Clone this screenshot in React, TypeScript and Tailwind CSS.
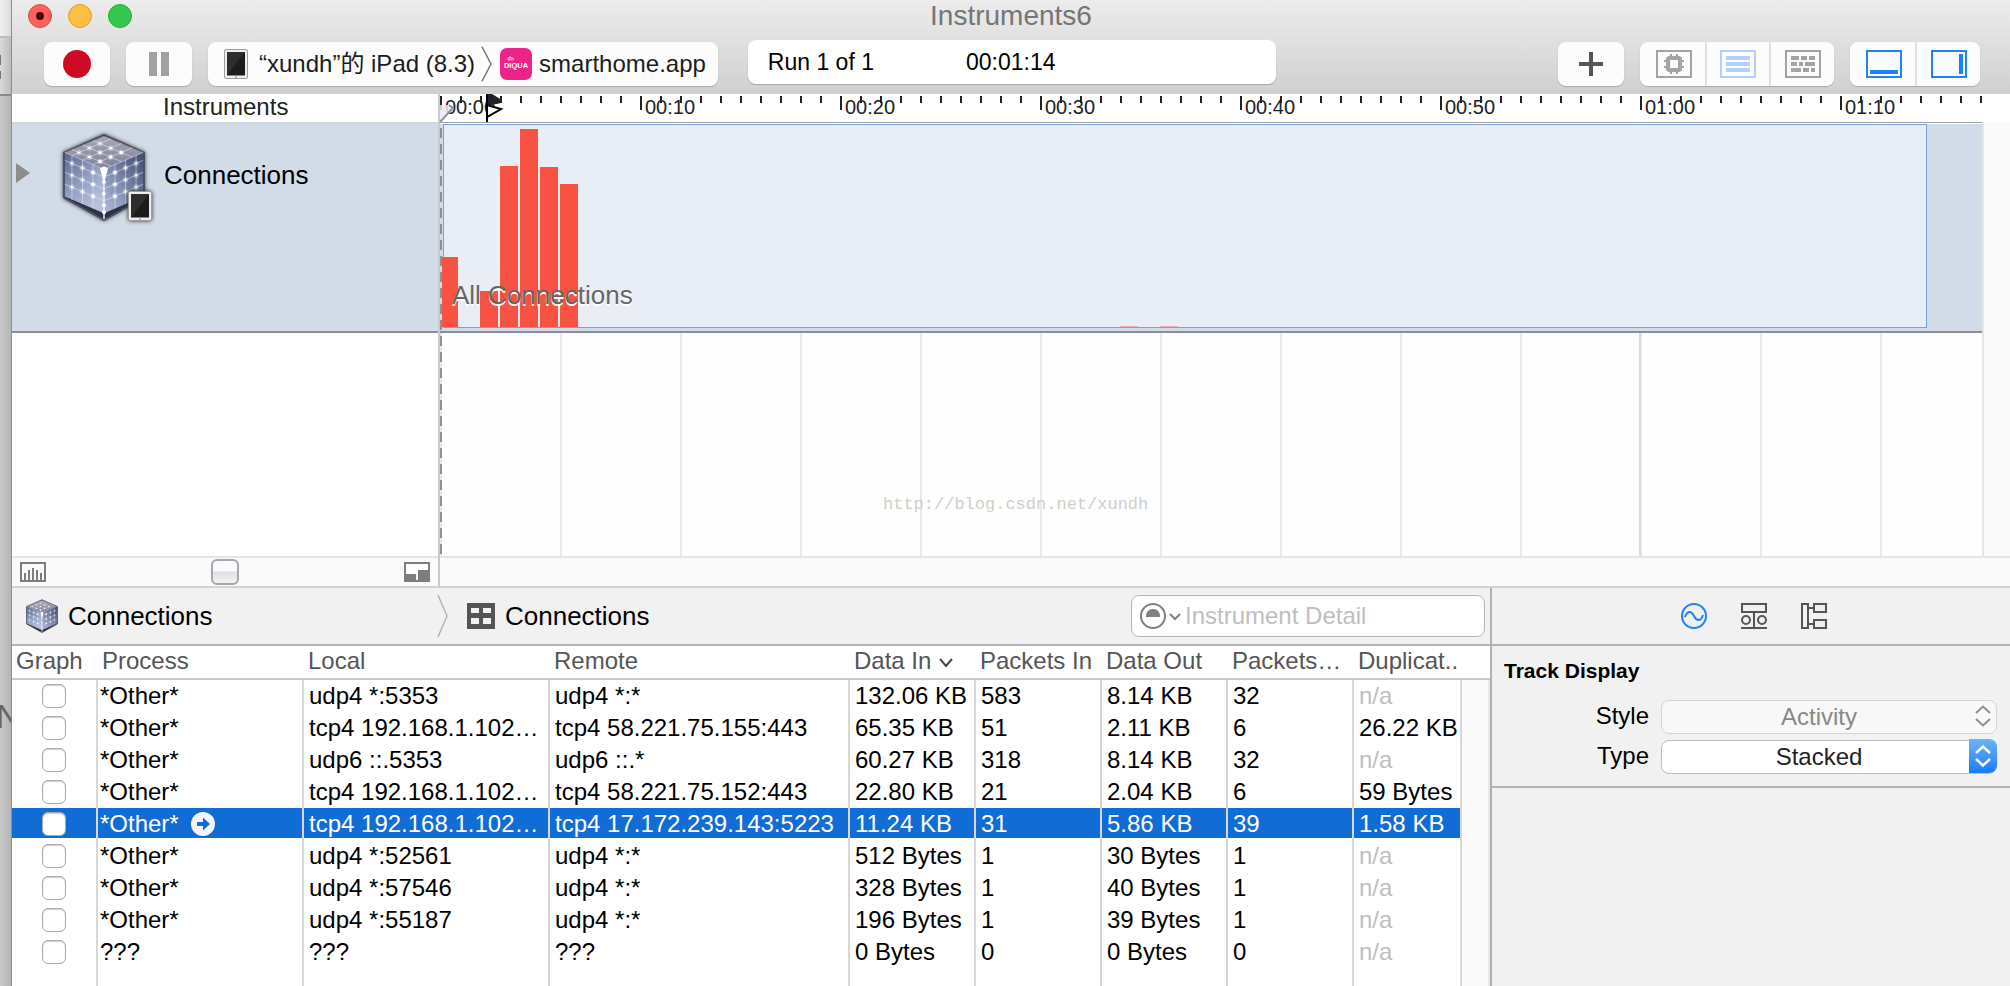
import type { ReactNode } from 'react';

type Point = [number, number];

const PX_PER_SECOND = 20;

const timeLabels = ['00:00', '00:10', '00:20', '00:30', '00:40', '00:50', '01:00', '01:10'];

const bars = [
  { x: 2, width: 16, height: 70 },
  { x: 40, width: 18, height: 36 },
  { x: 60, width: 18, height: 161 },
  { x: 80, width: 18, height: 198 },
  { x: 100, width: 18, height: 160 },
  { x: 120, width: 18, height: 143 },
];

const connections = [
  { process: '*Other*', local: 'udp4 *:5353', remote: 'udp4 *:*', dataIn: '132.06 KB', packetsIn: '583', dataOut: '8.14 KB', packetsOut: '32', duplicates: 'n/a' },
  { process: '*Other*', local: 'tcp4 192.168.1.102…', remote: 'tcp4 58.221.75.155:443', dataIn: '65.35 KB', packetsIn: '51', dataOut: '2.11 KB', packetsOut: '6', duplicates: '26.22 KB' },
  { process: '*Other*', local: 'udp6 ::.5353', remote: 'udp6 ::.*', dataIn: '60.27 KB', packetsIn: '318', dataOut: '8.14 KB', packetsOut: '32', duplicates: 'n/a' },
  { process: '*Other*', local: 'tcp4 192.168.1.102…', remote: 'tcp4 58.221.75.152:443', dataIn: '22.80 KB', packetsIn: '21', dataOut: '2.04 KB', packetsOut: '6', duplicates: '59 Bytes' },
  { process: '*Other*', local: 'tcp4 192.168.1.102…', remote: 'tcp4 17.172.239.143:5223', dataIn: '11.24 KB', packetsIn: '31', dataOut: '5.86 KB', packetsOut: '39', duplicates: '1.58 KB', selected: true },
  { process: '*Other*', local: 'udp4 *:52561', remote: 'udp4 *:*', dataIn: '512 Bytes', packetsIn: '1', dataOut: '30 Bytes', packetsOut: '1', duplicates: 'n/a' },
  { process: '*Other*', local: 'udp4 *:57546', remote: 'udp4 *:*', dataIn: '328 Bytes', packetsIn: '1', dataOut: '40 Bytes', packetsOut: '1', duplicates: 'n/a' },
  { process: '*Other*', local: 'udp4 *:55187', remote: 'udp4 *:*', dataIn: '196 Bytes', packetsIn: '1', dataOut: '39 Bytes', packetsOut: '1', duplicates: 'n/a' },
  { process: '???', local: '???', remote: '???', dataIn: '0 Bytes', packetsIn: '0', dataOut: '0 Bytes', packetsOut: '0', duplicates: 'n/a' },
];

const lerp = (a: Point, b: Point, t: number): Point => [a[0] + (b[0] - a[0]) * t, a[1] + (b[1] - a[1]) * t];

// One face of the cube is given by its origin corner and its two neighbours
const cubeFaces: { o: Point; u: Point; v: Point; fill: string }[] = [
  { o: [2, 20], u: [42, 37], v: [42, 3], fill: 'url(#cubeTop)' },
  { o: [2, 20], u: [42, 37], v: [2, 65], fill: 'url(#cubeLeft)' },
  { o: [82, 20], u: [42, 37], v: [82, 65], fill: 'url(#cubeRight)' },
];

const cubeSteps = [0.18, 0.45, 0.72];

function CubeIcon({ className }: { className: string }) {
  return (
    <svg viewBox="0 0 84 90" className={className} aria-hidden="true">
      <defs>
        <linearGradient id="cubeTop" x1="0" y1="0" x2="0" y2="1">
          <stop offset="0" stopColor="#a9a6b4" />
          <stop offset="1" stopColor="#7d8199" />
        </linearGradient>
        <linearGradient id="cubeLeft" x1="0" y1="0" x2="0.6" y2="1">
          <stop offset="0" stopColor="#5a648c" />
          <stop offset="0.6" stopColor="#96a5c6" />
          <stop offset="1" stopColor="#b9c2da" />
        </linearGradient>
        <linearGradient id="cubeRight" x1="1" y1="0" x2="0.2" y2="1">
          <stop offset="0" stopColor="#3f486b" />
          <stop offset="0.6" stopColor="#7f8caf" />
          <stop offset="1" stopColor="#a7b1d2" />
        </linearGradient>
      </defs>
      <path d="M42 2 83 20V66L42 89 1 66V20Z" fill="#2d3248" stroke="#4b5165" strokeWidth="2" strokeLinejoin="round" />
      {cubeFaces.map(({ o, u, v, fill }) => {
        const far: Point = [u[0] + v[0] - o[0], u[1] + v[1] - o[1]];
        return (
          <g key={fill}>
            <polygon points={[o, u, far, v].join(' ')} fill={fill} />
            {cubeSteps.map((t) => {
              const [a, b, c, d] = [lerp(o, u, t), lerp(v, far, t), lerp(o, v, t), lerp(u, far, t)];
              return (
                <g key={t} stroke="#e6ebf8" strokeWidth="1" strokeOpacity="0.55">
                  <line x1={a[0]} y1={a[1]} x2={b[0]} y2={b[1]} />
                  <line x1={c[0]} y1={c[1]} x2={d[0]} y2={d[1]} />
                </g>
              );
            })}
            {cubeSteps.flatMap((s) =>
              cubeSteps.map((t) => {
                const p = lerp(lerp(o, u, s), lerp(v, far, s), t);
                return (
                  <g key={`${s}-${t}`} fill="#fff">
                    <circle cx={p[0]} cy={p[1]} r="3" fillOpacity="0.3" />
                    <circle cx={p[0]} cy={p[1]} r={1 + s} />
                  </g>
                );
              }),
            )}
          </g>
        );
      })}
      <path d="M2 20 42 37 82 20" fill="none" stroke="#e6ebf8" strokeOpacity="0.6" />
      <path d="M42 37V88" fill="none" stroke="#eef1fb" strokeWidth="1.5" />
      <path d="M38 36 42 34 46 36 43 48H41Z" fill="#fff" />
      {[50, 62, 74, 81].map((y) => (
        <circle key={y} cx="42" cy={y} r="2" fill="#fff" />
      ))}
    </svg>
  );
}

function TabletIcon({ className }: { className: string }) {
  return (
    <svg viewBox="0 0 24 30" className={className} aria-hidden="true">
      <rect x="0.5" y="0.5" width="23" height="29" rx="1.5" fill="#eee" stroke="#9d9d9d" />
      <rect x="3" y="3" width="18" height="23.5" fill="#1c1c1c" />
      <path d="M3 26.5V3H21Z" fill="#2e2e2e" />
      <rect x="11" y="27.5" width="2" height="1.5" fill="#aaa" />
    </svg>
  );
}

function CrumbChevron({ className }: { className: string }) {
  return (
    <svg viewBox="0 0 11 44" preserveAspectRatio="none" className={className} aria-hidden="true">
      <path d="M1 1 10 22 1 43" fill="none" stroke="currentColor" strokeWidth="1.5" />
    </svg>
  );
}

function ToolButton({ label, className, children }: { label: string; className: string; children: ReactNode }) {
  return (
    <button type="button" aria-label={label} className={`flex h-11 items-center justify-center bg-[#fcfcfc] ${className}`}>
      {children}
    </button>
  );
}

function FrameIcon({ children }: { children: ReactNode }) {
  return (
    <svg viewBox="0 0 36 28" className="h-7 w-9" fill="currentColor" aria-hidden="true">
      <rect x="1" y="1" width="34" height="26" fill="none" stroke="currentColor" strokeWidth="2" />
      {children}
    </svg>
  );
}

function TitleBar() {
  return (
    <header className="bg-linear-to-b from-[#ececec] to-[#d0d0d0]">
      <div className="grid h-8 grid-cols-[1fr_auto_1fr] items-center px-4">
        <div className="flex gap-4">
          <button type="button" aria-label="Close" className="flex size-6 items-center justify-center rounded-full border border-[#e2463f] bg-[#fc615d]">
            <span className="size-2 rounded-full bg-[#4d0000]" />
          </button>
          <button type="button" aria-label="Minimize" className="size-6 rounded-full border border-[#dfa033] bg-[#fdbe41]" />
          <button type="button" aria-label="Zoom" className="size-6 rounded-full border border-[#27aa35] bg-[#34c94a]" />
        </div>
        <h1 className="text-[28px] leading-8 text-[#757575]">Instruments6</h1>
      </div>

      <div className="flex h-[62px] items-end pr-[30px] pb-2 pl-8">
        <ToolButton label="Record" className="w-[66px] rounded-lg shadow-[0_1px_1px_#aaa]">
          <span className="size-7 rounded-full bg-[#ce0b24]" />
        </ToolButton>
        <ToolButton label="Pause" className="ml-4 w-[66px] gap-1 rounded-lg shadow-[0_1px_1px_#aaa]">
          <span className="h-6 w-2 bg-[#a2a2a2]" />
          <span className="h-6 w-2 bg-[#a2a2a2]" />
        </ToolButton>

        <button type="button" className="ml-4 flex h-11 items-center rounded-lg bg-[#fcfcfc] pr-3 pl-4 whitespace-nowrap text-[#1c1c1c] shadow-[0_1px_1px_#aaa]">
          <TabletIcon className="mr-[11px] h-[30px] w-6" />
          “xundh”的 iPad (8.3)
          <CrumbChevron className="mr-2 ml-1.5 h-9 w-[11px] text-[#777]" />
          <svg viewBox="0 0 32 32" className="mr-[7px] size-8" aria-hidden="true">
            <rect width="32" height="32" rx="7" fill="#ee2389" />
            <path d="M7 11.500Q10.500 7 14 11.500M8.500 12.500Q10.500 10 12.500 12.500" fill="none" stroke="#f9a8d0" strokeWidth="1.300" />
            <text x="16" y="19.500" textAnchor="middle" fontSize="7.500" fontWeight="700" fill="#fff">DIQUA</text>
          </svg>
          smarthome.app
        </button>

        <div className="mb-0.5 ml-[30px] flex h-11 w-[528px] items-center gap-[92px] rounded-lg bg-white pl-5 text-[23px] whitespace-nowrap shadow-[0_1px_1px_#aaa]">
          <span>Run 1 of 1</span>
          <time>00:01:14</time>
        </div>

        <div className="ml-auto flex gap-4">
          <ToolButton label="Add instrument" className="w-[66px] rounded-lg shadow-[0_1px_1px_#aaa]">
            <svg viewBox="0 0 24 24" className="size-6" aria-hidden="true">
              <path d="M12 0V24M0 12H24" stroke="#555" strokeWidth="4" />
            </svg>
          </ToolButton>

          <div className="flex gap-0.5 rounded-lg bg-[#e0e0e0] shadow-[0_1px_1px_#aaa]">
            <ToolButton label="CPU strategy" className="w-[65px] rounded-l-lg pl-0.5 text-[#a3a3a3]">
              <FrameIcon>
                <path fillRule="evenodd" d="M12 6H24L26 8V20L24 22H12L10 20V8ZM14 10V18H22V10Z" />
                <path d="M14 4h2v2h-2zM20 4h2v2h-2zM14 22h2v2h-2zM20 22h2v2h-2zM8 10h2v2H8zM8 16h2v2H8zM26 10h2v2h-2zM26 16h2v2h-2z" />
              </FrameIcon>
            </ToolButton>
            <ToolButton label="Instruments strategy" className="w-[62px] text-[#afd2fc]">
              <FrameIcon>
                <path d="M6 6H30V10H6ZM6 12H30V16H6ZM6 18H30V22H6Z" />
              </FrameIcon>
            </ToolButton>
            <ToolButton label="Threads strategy" className="w-[63px] rounded-r-lg text-[#a3a3a3]">
              <FrameIcon>
                <path d="M6 6h8v4H6zM16 6h6v4h-6zM24 6h6v4h-6zM6 12h6v4H6zM14 12h4v4h-4zM20 12h10v4H20zM6 18h10v4H6zM18 18h6v4h-6zM26 18h4v4h-4z" />
              </FrameIcon>
            </ToolButton>
          </div>

          <div className="flex gap-0.5 rounded-lg bg-[#e0e0e0] text-[#1f82fb] shadow-[0_1px_1px_#aaa]">
            <ToolButton label="Toggle detail pane" className="w-[65px] rounded-l-lg pl-0.5">
              <FrameIcon>
                <path d="M4 20H32V24H4Z" />
              </FrameIcon>
            </ToolButton>
            <ToolButton label="Toggle inspector" className="w-[63px] rounded-r-lg">
              <FrameIcon>
                <path d="M28 4H32V24H28Z" />
              </FrameIcon>
            </ToolButton>
          </div>
        </div>
      </div>
    </header>
  );
}

function InstrumentList() {
  return (
    <div className="flex w-[428px] shrink-0 flex-col border-r-2 border-[#c9c9c9] bg-white">
      <h2 className="h-7 pl-[151px] leading-[26px] text-[#222]">Instruments</h2>

      <div className="flex h-[211px] items-start border-t border-b-2 border-t-[#cfd3d9] border-b-[#8b8f9a] bg-[#d2dce8]">
        <button type="button" aria-label="Expand Connections" className="mt-10 ml-1">
          <svg viewBox="0 0 14 20" className="h-5 w-3.5" aria-hidden="true">
            <path d="M0 0 14 10 0 20Z" fill="#8c8c8c" />
          </svg>
        </button>
        <div className="relative mt-2.5 ml-8 h-[88px] w-[84px]">
          <CubeIcon className="h-full w-full drop-shadow-[0_0_2px_#444]" />
          <TabletIcon className="absolute -right-1.5 bottom-0 h-[30px] w-6 drop-shadow-[0_0_2px_#333]" />
        </div>
        <span className="mt-9 ml-[18px] text-[26px] leading-8">Connections</span>
      </div>

      <div className="flex-1" />

      <div className="flex h-[30px] items-center justify-between border-t-2 border-[#e5e5e5] bg-[#fafafa] px-2 text-[#7b7d80]">
        <button type="button" aria-label="Fit timeline">
          <svg viewBox="0 0 26 20" className="h-5 w-[26px]" aria-hidden="true">
            <rect x="1" y="1" width="24" height="18" fill="none" stroke="currentColor" strokeWidth="2" />
            <path d="M5 18V11M9 18V8M13 18V6M17 18V8M21 18V11" stroke="currentColor" strokeWidth="2" />
          </svg>
        </button>
        <input
          type="range"
          aria-label="Timeline scale"
          defaultValue={50}
          className="h-[26px] w-[280px] appearance-none bg-transparent [&::-webkit-slider-thumb]:h-[26px] [&::-webkit-slider-thumb]:w-7 [&::-webkit-slider-thumb]:appearance-none [&::-webkit-slider-thumb]:rounded-md [&::-webkit-slider-thumb]:border-2 [&::-webkit-slider-thumb]:border-[#a6a6b0] [&::-webkit-slider-thumb]:bg-[linear-gradient(#fafafa_45%,#dfe1e3_50%,#f2f2f2)]"
        />
        <button type="button" aria-label="Track size">
          <svg viewBox="0 0 26 20" className="h-5 w-[26px]" aria-hidden="true">
            <rect x="1" y="1" width="24" height="18" fill="#fff" stroke="currentColor" strokeWidth="2" />
            <path d="M2 12H12V19H2ZM14 8H25V19H14Z" fill="currentColor" />
          </svg>
        </button>
      </div>
    </div>
  );
}

function Ruler() {
  return (
    <div className="relative flex h-7 overflow-hidden bg-white">
      {timeLabels.map((label) => (
        <span key={label} className="w-[200px] shrink-0 pl-[5px] text-[20px] leading-[26px] text-[#222]">
          {label}
        </span>
      ))}
      <svg className="absolute inset-0 h-full w-full" aria-hidden="true">
        {Array.from({ length: 78 }, (_, i) => (
          <rect key={i} x={i * PX_PER_SECOND} y="2" width="2" height={i % 10 === 0 ? 14 : 7} fill="#222" />
        ))}
        <path d="M0 11H10L14 15 0 28Z" fill="#e9e9f0" fillOpacity="0.85" />
        <path d="M9 11 13 14 0 28" fill="none" stroke="#8f8f8f" strokeWidth="2" />
        <path d="M47 11 61 15 47 23Z" fill="#fff" stroke="#000" strokeWidth="2" />
        <path d="M47 0H52L62 6 61 9 47 12Z" fill="#222" />
        <rect x="46" width="2" height="28" />
      </svg>
    </div>
  );
}

function Timeline() {
  return (
    <div className="flex min-w-0 flex-1 flex-col">
      <Ruler />

      <div className="flex flex-1">
        <div className="relative flex min-w-0 flex-1 flex-col overflow-hidden border-t border-[#a3a0a3]">
          <div className="relative h-[210px] border-t border-b-2 border-t-white border-b-[#8b8f9a] bg-[#d2dce8]">
            <svg className="h-full w-full" aria-label="Connection activity">
              <rect x="3.500" y="0.500" width="1483" height="203" fill="#e8edf6" stroke="#79a1dd" />
              {bars.map((bar) => (
                <rect key={bar.x} x={bar.x} y={203 - bar.height} width={bar.width} height={bar.height} fill="#f75242" />
              ))}
              <rect x="680" y="202" width="18" height="1" fill="#efb1b3" />
              <rect x="720" y="202" width="18" height="1" fill="#efb1b3" />
            </svg>
            <span className="absolute bottom-5 left-3 text-[26px] leading-8 text-[#666] [text-shadow:0_2px_0_#fff]">All Connections</span>
          </div>

          <div className="relative flex-1 bg-[#fefefe] bg-[repeating-linear-gradient(90deg,#ece8ea_0_2px,transparent_2px_120px)]">
            <div className="absolute inset-y-0 left-[1199px] w-0.5 bg-[#dedbde]" />
            <span className="absolute top-[158px] left-[443px] font-['Liberation_Mono',monospace] text-[17px] leading-7 text-[#cfd0c9]">
              http://blog.csdn.net/xundh
            </span>
          </div>

          <div className="absolute top-[5px] bottom-0 left-0 w-0.5 bg-[repeating-linear-gradient(#8f9095_0_10px,transparent_10px_16px)]" />
        </div>
        <div className="w-7 border-l-2 border-[#e6e6e6] bg-[#fafafa]" />
      </div>

      <div className="h-[30px] border-t-2 border-[#e5e5e5] bg-[#fafafa]" />
    </div>
  );
}

function DetailBar() {
  return (
    <div className="flex h-[58px] shrink-0 items-center border-b-2 border-[#b4b4b4] bg-[#f1f1f1] text-[26px]">
      <div className="flex w-[425px] shrink-0 items-center gap-2.5 pl-3.5">
        <CubeIcon className="h-[34px] w-8" />
        Connections
      </div>
      <CrumbChevron className="h-11 w-[11px] text-[#b5b5b5]" />
      <svg viewBox="0 0 28 26" className="mr-2.5 ml-[19px] h-[26px] w-7 shrink-0" aria-hidden="true">
        <path fillRule="evenodd" fill="#555" d="M0 0H28V26H0ZM4 5V10H12V5ZM16 5V10H24V5ZM4 15V21H12V15ZM16 15V21H24V15Z" />
      </svg>
      Connections

      <label className="mr-[5px] ml-auto flex h-[42px] w-[354px] items-center rounded-lg border border-[#b5b5b5] bg-white pl-[7px]">
        <svg viewBox="0 0 42 28" className="mr-1 h-7 w-[42px] shrink-0" aria-hidden="true">
          <circle cx="14" cy="14" r="12" fill="none" stroke="#808080" strokeWidth="2" />
          <path d="M7 15Q7 7 14 7T21 15Z" fill="#808080" />
          <path d="M31 12 36 17 41 12" fill="none" stroke="#808080" strokeWidth="2" />
        </svg>
        <input type="search" aria-label="Instrument Detail" placeholder="Instrument Detail" className="w-full min-w-0 text-[24px] outline-none placeholder:text-[#bfbfbf]" />
      </label>
    </div>
  );
}

const cell = 'h-8 overflow-hidden border-r-2 border-[#dad6d8] p-0 pl-[5px] whitespace-nowrap';
const heading = 'h-[34px] overflow-hidden border-b-2 border-[#c9c9c9] p-0 pb-0.5 pl-1 text-left leading-[30px] font-normal whitespace-nowrap';

function ConnectionsTable() {
  return (
    <table className="w-full flex-1 table-fixed border-separate border-spacing-0 bg-white leading-8">
      <colgroup>
        <col className="w-[86px]" />
        <col className="w-[206px]" />
        <col className="w-[246px]" />
        <col className="w-[300px]" />
        <col className="w-[126px]" />
        <col className="w-[126px]" />
        <col className="w-[126px]" />
        <col className="w-[126px]" />
        <col className="w-[108px]" />
        <col />
      </colgroup>
      <thead className="text-[#555]">
        <tr>
          <th className={heading}>Graph</th>
          <th className={heading}>Process</th>
          <th className={heading}>Local</th>
          <th className={heading}>Remote</th>
          <th className={heading} aria-sort="descending">
            <span className="flex items-center gap-2">
              Data In
              <svg viewBox="0 0 14 10" className="mt-1 h-2.5 w-3.5" aria-hidden="true">
                <path d="M1 1 7 8 13 1" fill="none" stroke="#444" strokeWidth="2" />
              </svg>
            </span>
          </th>
          <th className={heading}>Packets In</th>
          <th className={heading}>Data Out</th>
          <th className={heading}>Packets…</th>
          <th className={heading}>Duplicat..</th>
          <th className={heading} />
        </tr>
      </thead>
      <tbody>
        {connections.map((row, index) => (
          <tr key={index} className={row.selected ? 'text-white [&>td:not(:last-child)]:bg-[linear-gradient(#116cd6_30px,white_30px)]' : 'text-black'}>
            <td className="h-8 border-r-2 border-[#dad6d8] p-0">
              <input
                type="checkbox"
                aria-label={`Graph ${row.local}`}
                className="mx-auto block size-6 appearance-none rounded-md border border-[#a8a8a8] bg-white shadow-[inset_0_1px_1px_#ccc]"
              />
            </td>
            <td className="h-8 border-r-2 border-[#dad6d8] p-0 pl-0.5">
              <span className="flex items-center gap-3">
                {row.process}
                {row.selected && (
                  <button type="button" aria-label="Focus on process" className="size-6">
                    <svg viewBox="0 0 24 24" aria-hidden="true">
                      <circle cx="12" cy="12" r="12" fill="#f4f6fa" />
                      <path d="M6 10H12V5.500L19 12 12 18.500V14H6Z" fill="#116cd6" />
                    </svg>
                  </button>
                )}
              </span>
            </td>
            <td className={cell}>{row.local}</td>
            <td className={cell}>{row.remote}</td>
            <td className={cell}>{row.dataIn}</td>
            <td className={cell}>{row.packetsIn}</td>
            <td className={cell}>{row.dataOut}</td>
            <td className={cell}>{row.packetsOut}</td>
            <td className={cell}>
              <span className={row.duplicates === 'n/a' ? 'text-[#bfbfbf]' : ''}>{row.duplicates}</span>
            </td>
            <td className="border-r-2 border-[#e8e8e8] bg-[#fafafa] p-0" />
          </tr>
        ))}
        <tr>
          {Array.from({ length: 9 }, (_, i) => (
            <td key={i} className="border-r-2 border-[#dad6d8] p-0" />
          ))}
          <td className="border-r-2 border-[#e8e8e8] bg-[#fafafa] p-0" />
        </tr>
      </tbody>
    </table>
  );
}

function Inspector() {
  return (
    <aside className="w-[520px] shrink-0 border-l-2 border-[#b0b0b0] bg-[#f1f1f1]">
      <div className="flex h-[58px] items-center justify-center gap-[34px] border-b-2 border-[#b4b4b4] pl-1.5 text-[#555]">
        <button type="button" aria-label="Display settings" className="text-[#1f82fb]">
          <svg viewBox="0 0 26 26" className="size-[26px]" fill="none" stroke="currentColor" strokeWidth="2" aria-hidden="true">
            <circle cx="13" cy="13" r="12" />
            <path d="M4 14C6 8 10 7 13 13S20 18 22 12" />
          </svg>
        </button>
        <button type="button" aria-label="Record settings">
          <svg viewBox="0 0 26 26" className="size-[26px]" fill="none" stroke="currentColor" strokeWidth="2" aria-hidden="true">
            <path d="M1 1H25V9H1ZM13 9V25M0 25H26" />
            <circle cx="5" cy="17" r="4" />
            <circle cx="21" cy="17" r="4" />
          </svg>
        </button>
        <button type="button" aria-label="Extended detail">
          <svg viewBox="0 0 26 26" className="size-[26px]" fill="none" stroke="currentColor" strokeWidth="2" aria-hidden="true">
            <path d="M1 1H7V25H1ZM13 1H25V9H13ZM13 17H25V25H13ZM7 5H13M7 21H13" />
          </svg>
        </button>
      </div>

      <div className="border-b-2 border-[#b4b4b4] pt-3 pb-[13px]">
        <h2 className="pl-3 text-[21px] leading-[26px] font-bold">Track Display</h2>
        <div className="mt-[15px] grid grid-cols-[157px_1fr] items-center gap-x-3 gap-y-1.5 pr-[13px]">
          <label htmlFor="style" className="text-right leading-8">Style</label>
          <div className="relative h-[34px]">
            <select id="style" disabled className="h-full w-full appearance-none rounded-lg border border-[#d4d4d4] bg-[#f8f8f8] pr-5 leading-8 text-[#888] opacity-100 [text-align-last:center]">
              <option>Activity</option>
            </select>
            <svg viewBox="0 0 28 34" className="pointer-events-none absolute inset-y-0 right-0 h-full w-7" aria-hidden="true">
              <path d="M7 14 14 7.500 21 14M7 20 14 26.500 21 20" fill="none" stroke="#8e8e8e" strokeWidth="2" />
            </svg>
          </div>
          <label htmlFor="type" className="text-right leading-8">Type</label>
          <div className="relative h-[34px]">
            <select id="type" className="h-full w-full appearance-none rounded-lg border border-[#bdbdbd] bg-white pr-5 leading-8 text-[#222] [text-align-last:center]">
              <option>Stacked</option>
            </select>
            <svg viewBox="0 0 28 34" className="pointer-events-none absolute inset-y-0 right-0 h-full w-7 rounded-r-lg bg-linear-to-b from-[#6db3f9] to-[#147afb]" aria-hidden="true">
              <path d="M7 14 14 7.500 21 14M7 20 14 26.500 21 20" fill="none" stroke="#fff" strokeWidth="2.500" />
            </svg>
          </div>
        </div>
      </div>
    </aside>
  );
}

// Sliver of the window that lies behind this one
function BackgroundWindow() {
  return (
    <div className="relative flex w-3 shrink-0 flex-col overflow-hidden border-r border-[#8d8d8d] bg-linear-to-r from-[#c9c9c9] to-[#b4b4b4]">
      <div className="h-9 bg-linear-to-r from-[#f0f0f0] to-[#dcdcdc]" />
      <div className="flex h-[60px] flex-col gap-1.5 border-t-2 border-b-2 border-t-[#bdbdbd] border-b-[#8a8a8a] bg-linear-to-r from-[#dadada] to-[#bcbcbc] pt-[17px]">
        <span className="h-2.5 w-px bg-[#777]" />
        <span className="h-2 w-px bg-[#777]" />
      </div>
      <span className="absolute top-[696px] -left-1 text-[34px] leading-10 text-[#666]" aria-hidden="true">N</span>
    </div>
  );
}

export default function App() {
  return (
    <div className="flex min-h-screen bg-white font-['Liberation_Sans','Noto_Sans_CJK_SC',sans-serif] text-[24px] text-black">
      <BackgroundWindow />
      <main className="flex min-w-0 flex-1 flex-col">
        <TitleBar />
        <section className="flex h-[494px] shrink-0 border-b-2 border-[#d3d3d3]">
          <InstrumentList />
          <Timeline />
        </section>
        <section className="flex flex-1">
          <div className="flex min-w-0 flex-1 flex-col">
            <DetailBar />
            <div className="flex flex-1">
              <ConnectionsTable />
            </div>
          </div>
          <Inspector />
        </section>
      </main>
    </div>
  );
}
